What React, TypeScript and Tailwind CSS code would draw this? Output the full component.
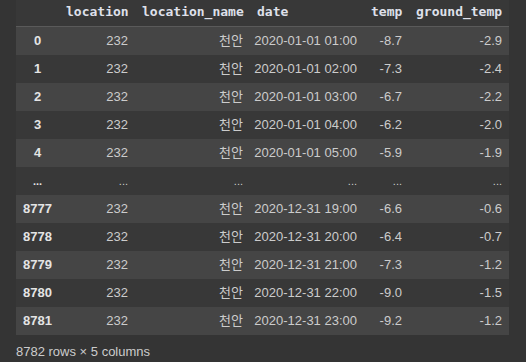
const cols = ["location", "location_name", "date", "temp", "ground_temp"];

type Row = [string, string, string, string, string, string];

const head: Row[] = [
  ["0", "232", "천안", "2020-01-01 01:00", "-8.7", "-2.9"],
  ["1", "232", "천안", "2020-01-01 02:00", "-7.3", "-2.4"],
  ["2", "232", "천안", "2020-01-01 03:00", "-6.7", "-2.2"],
  ["3", "232", "천안", "2020-01-01 04:00", "-6.2", "-2.0"],
  ["4", "232", "천안", "2020-01-01 05:00", "-5.9", "-1.9"],
];

const tail: Row[] = [
  ["8777", "232", "천안", "2020-12-31 19:00", "-6.6", "-0.6"],
  ["8778", "232", "천안", "2020-12-31 20:00", "-6.4", "-0.7"],
  ["8779", "232", "천안", "2020-12-31 21:00", "-7.3", "-1.2"],
  ["8780", "232", "천안", "2020-12-31 22:00", "-9.0", "-1.5"],
  ["8781", "232", "천안", "2020-12-31 23:00", "-9.2", "-1.2"],
];

const grid = "grid grid-cols-[43px_76px_115px_114px_45px_100px]";

function DataRow({ row, striped }: { row: Row; striped: boolean }) {
  return (
    <div className={`${grid} h-[28px] items-center ${striped ? "bg-[#454545]" : ""}`}>
      <div className="text-center font-bold text-[#e4e4e4]">{row[0]}</div>
      {row.slice(1).map((v, i) => (
        <div key={i} className="flex justify-end whitespace-nowrap px-[7px]">
          {v}
        </div>
      ))}
    </div>
  );
}

function EllipsisRow() {
  return (
    <div className={`${grid} h-[28px] items-center text-[11px]`}>
      <div className="text-center font-bold text-[#e4e4e4]">...</div>
      {cols.map((c) => (
        <div key={c} className="px-[7px] text-right">
          ...
        </div>
      ))}
    </div>
  );
}

export default function App() {
  const rows = [...head.map((r) => ({ r })), null, ...tail.map((r) => ({ r }))];
  return (
    <div
      className="h-[362px] w-[526px] overflow-hidden bg-[#343434] pl-4 text-[13px] text-[#cccccc]"
      style={{ fontFamily: '"Liberation Sans", "Noto Sans CJK KR", sans-serif' }}
    >
      <div className="w-[493px] bg-[#383838]">
        <div className={`${grid} h-[27px] items-center border-b border-[#5a5a5a] pb-[3px] font-['DejaVu_Sans_Mono',monospace] font-bold text-[#dfe0ea]`}>
          <div />
          {cols.map((c) => (
            <div key={c} className="px-[7px] text-left whitespace-nowrap">
              {c}
            </div>
          ))}
        </div>
        {rows.map((x, i) =>
          x === null ? (
            <EllipsisRow key={i} />
          ) : (
            <DataRow key={i} row={x.r} striped={i % 2 === 0} />
          )
        )}
      </div>
      <div className="mt-[7px]">8782 rows × 5 columns</div>
    </div>
  );
}
